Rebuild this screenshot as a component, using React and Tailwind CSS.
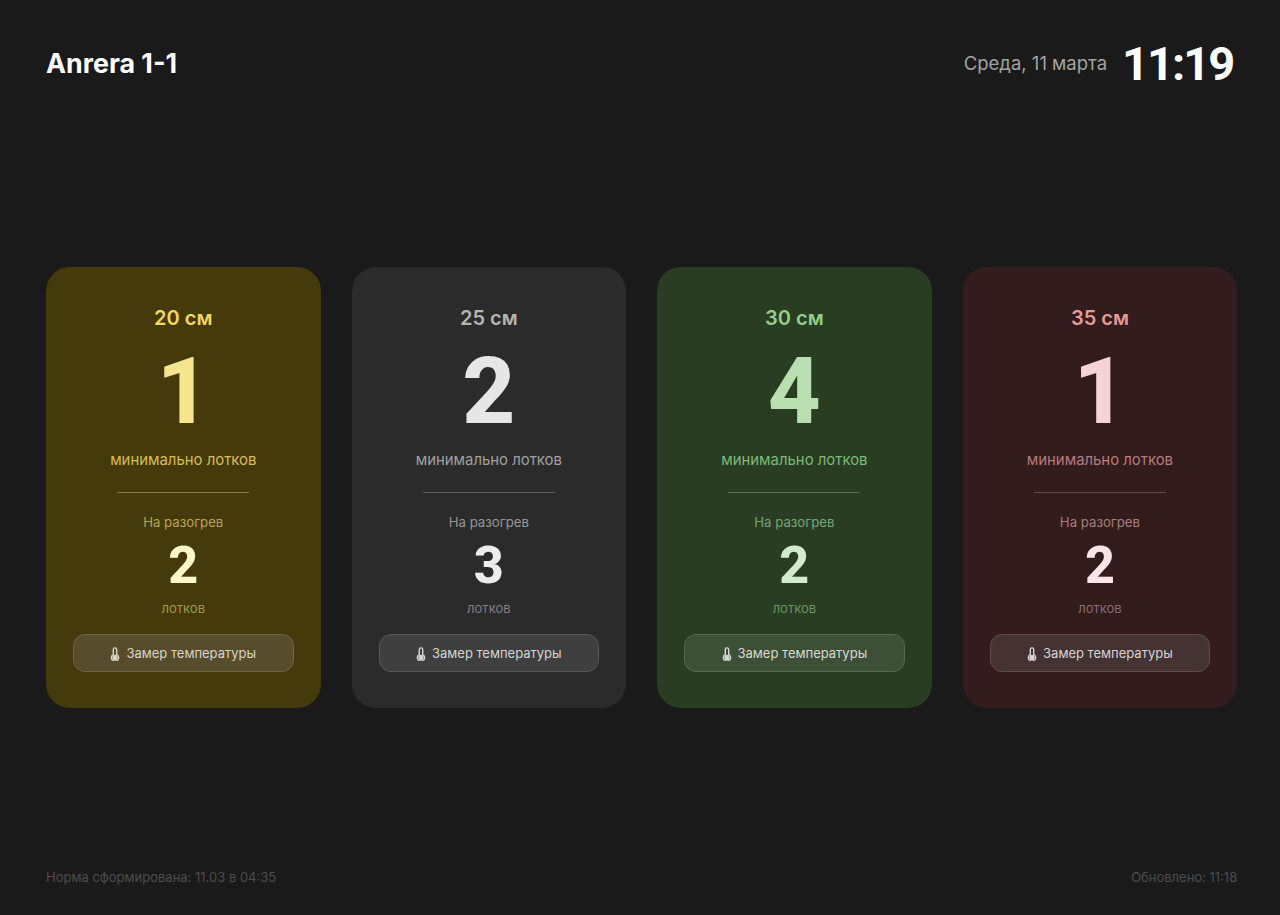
const cards = [
    {
        size: '20 см', min: 1, warm: 2,
        card: 'bg-[#443a0c]', title: 'text-[#f4d75e]', big: 'text-[#f6e58f]', label: 'text-[#d8bd55]',
        line: 'bg-[#8d7d38]', warmLabel: 'text-[#b9a54f]', warmNum: 'text-[#fdf6c8]', unit: 'text-[#a8953f]',
        btn: 'bg-[#574d2c] border-[#6f6644]', btnText: 'text-[#d8d4c4]',
    },
    {
        size: '25 см', min: 2, warm: 3,
        card: 'bg-[#2b2b2b]', title: 'text-[#b4b4b4]', big: 'text-[#e6e6e6]', label: 'text-[#a0a0a0]',
        line: 'bg-[#5c5c5c]', warmLabel: 'text-[#969696]', warmNum: 'text-[#ececec]', unit: 'text-[#808080]',
        btn: 'bg-[#3f3f3f] border-[#595959]', btnText: 'text-[#d4d4d4]',
    },
    {
        size: '30 см', min: 4, warm: 2,
        card: 'bg-[#283d22]', title: 'text-[#93cf8b]', big: 'text-[#b9dfb1]', label: 'text-[#7fb878]',
        line: 'bg-[#54704c]', warmLabel: 'text-[#7ba474]', warmNum: 'text-[#d2ebcc]', unit: 'text-[#6b9564]',
        btn: 'bg-[#3d4f37] border-[#576951]', btnText: 'text-[#d4dbd1]',
    },
    {
        size: '35 см', min: 1, warm: 2,
        card: 'bg-[#321c1c]', title: 'text-[#e59a9a]', big: 'text-[#f6d4d6]', label: 'text-[#b87a7c]',
        line: 'bg-[#654545]', warmLabel: 'text-[#a67c7c]', warmNum: 'text-[#fae4e6]', unit: 'text-[#8f6a6a]',
        btn: 'bg-[#453232] border-[#5f4c4c]', btnText: 'text-[#d9d2d2]',
    },
];

function Thermometer() {
    return (
        <svg width="10" height="14" viewBox="0 0 10 14" className="shrink-0">
            <path d="M3.3 7.4V2.6a1.7 1.7 0 0 1 3.4 0v4.8a3.6 3.6 0 1 1-3.4 0Z" fill="none" stroke="currentColor" strokeWidth="1.4" />
            <circle cx="5" cy="10.4" r="2.6" fill="currentColor" />
        </svg>
    );
}

function Card({ c }) {
    return (
        <div className={`${c.card} h-[441px] rounded-[24px] flex flex-col items-center px-[27px] pt-[37px]`}>
            <div className={`${c.title} text-[20px] leading-[28px] font-semibold`}>{c.size}</div>
            <div className={`${c.big} mt-[12px] font-['Roboto',sans-serif] text-[92px] leading-[96px] font-extrabold`}>{c.min}</div>
            <div className={`${c.label} mt-[10px] text-[14.9px] leading-[20px]`}>минимально лотков</div>
            <div className={`${c.line} mt-[22px] h-px w-[132px]`} />
            <div className={`${c.warmLabel} mt-[20px] text-[13.2px] leading-[18px]`}>На разогрев</div>
            <div className={`${c.warmNum} mt-[11px] font-['Roboto',sans-serif] text-[52px] leading-[48px] font-extrabold`}>{c.warm}</div>
            <div className={`${c.unit} mt-[10px] text-[13px] leading-[16px]`}>лотков</div>
            <button className={`${c.btn} ${c.btnText} mt-[18px] h-[38px] w-full rounded-[12px] border flex items-center justify-center gap-[6px] text-[13px] pt-[1px]`}>
                <Thermometer />
                Замер температуры
            </button>
        </div>
    );
}

export default function App() {
    return (
        <div className="h-[915px] bg-[#1a1a1a] pl-[46px] pr-[42.8px] flex flex-col font-['Inter','Liberation_Sans',sans-serif]">
            {/* шапка */}
            <div className="h-[128px] flex items-center justify-between pr-[4px]">
                <div className="text-[26.8px] font-bold text-white -mt-[1px]">Anrera 1-1</div>
                <div className="flex items-center gap-[15px]">
                    <span className="text-[18.5px] text-[#a3a3a3]">Среда, 11 марта</span>
                    <span className="font-['Roboto',sans-serif] text-[47px] leading-[56px] font-bold text-white tracking-[-2px]">11:19</span>
                </div>
            </div>
            {/* карточки */}
            <div className="mt-[139px] grid grid-cols-4 gap-[31px]">
                {cards.map(c => <Card key={c.size} c={c} />)}
            </div>
            {/* подвал */}
            <div className="mt-auto h-[47px] flex justify-between text-[13px] text-[#4d4d4d]">
                <span>Норма сформирована: 11.03 в 04:35</span>
                <span>Обновлено: 11:18</span>
            </div>
        </div>
    );
}
